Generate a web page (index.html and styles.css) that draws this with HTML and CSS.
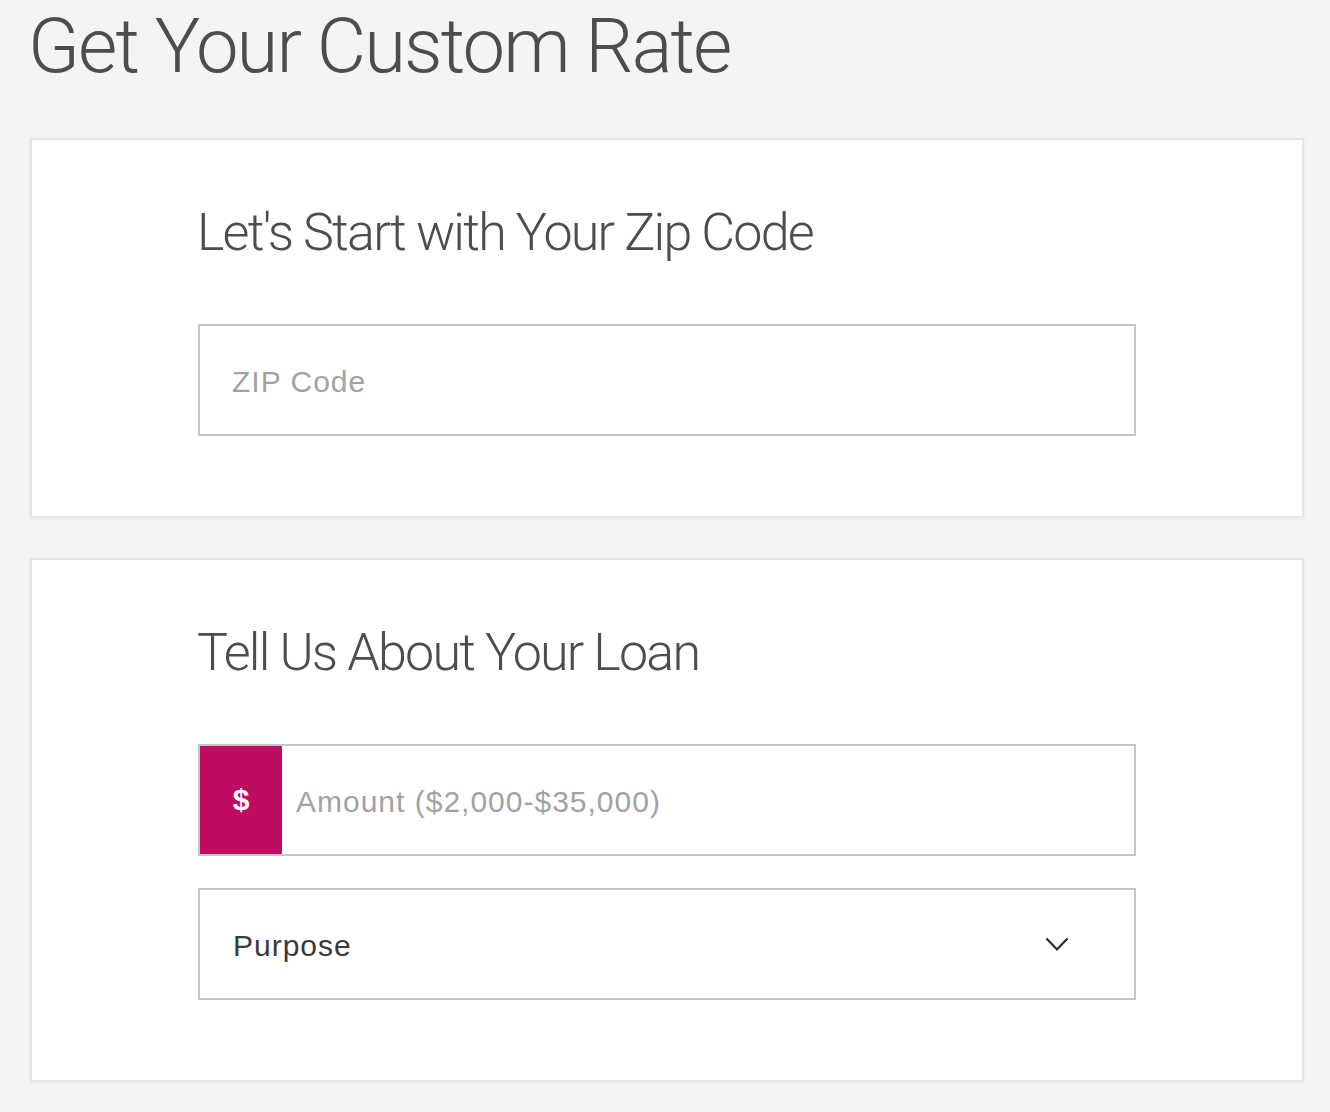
FILE: index.html
```html
<!DOCTYPE html>
<html lang="en">
<head>
<meta charset="utf-8">
<title>Get Your Custom Rate</title>
<link rel="stylesheet" href="styles.css">
</head>
<body>
<main class="page">
  <h1 class="page-title">Get Your Custom Rate</h1>

  <section class="card">
    <h2 class="card-title">Let's Start with Your Zip Code</h2>
    <div class="fields">
      <label class="field">
        <input class="field-input" type="text" placeholder="ZIP Code">
      </label>
    </div>
  </section>

  <section class="card">
    <h2 class="card-title">Tell Us About Your Loan</h2>
    <div class="fields">
      <label class="field field-money">
        <span class="field-prefix">$</span>
        <input class="field-input field-input-money" type="text" placeholder="Amount ($2,000-$35,000)">
      </label>
      <div class="field field-select">
        <span class="select-label">Purpose</span>
        <svg class="chevron" width="24" height="15" viewBox="0 0 24 15" aria-hidden="true">
          <path d="M1.5 1.5 L12 12.5 L22.5 1.5" fill="none" stroke="#2b2b2b" stroke-width="2.2"/>
        </svg>
      </div>
    </div>
  </section>
</main>
</body>
</html>
```

FILE: styles.css
```css
* {
  box-sizing: border-box;
}

html, body {
  margin: 0;
  padding: 0;
  background: #f4f4f4;
}

body {
  font-family: "Liberation Sans", Arial, sans-serif;
  color: #4d4d4d;
}

.page {
  padding: 0 26px 30px 28px;
}

.page-title {
  margin: 8px 0 54px;
  font-family: Roboto, "Liberation Sans", sans-serif;
  font-weight: 300;
  font-size: 76px;
  line-height: 76px;
  letter-spacing: -1.9px;
  color: #4d4d4d;
}

.card {
  margin-left: 2px;
  background: #fff;
  border: 2px solid #e6e6e6;
  box-shadow: 0 1px 3px rgba(0, 0, 0, 0.06);
  padding: 66px 166px 80px;
  margin-bottom: 40px;
}

.card-title {
  margin: 0 0 65px -1px;
  font-family: Roboto, "Liberation Sans", sans-serif;
  font-weight: 300;
  font-size: 52px;
  line-height: 53px;
  letter-spacing: -1.8px;
  color: #4d4d4d;
}

.fields {
  display: flex;
  flex-direction: column;
  gap: 32px;
}

.field {
  display: flex;
  align-items: center;
  height: 112px;
  border: 2px solid #c6c6c6;
  background: #fff;
}

.field-input {
  flex: 1;
  height: 100%;
  border: 0;
  outline: none;
  background: transparent;
  padding: 4px 0 0 32px;
  font-family: "Liberation Sans", Arial, sans-serif;
  font-size: 30px;
  letter-spacing: 1px;
  color: #333;
}

.field-input::placeholder {
  color: #a2a2a2;
  opacity: 1;
}

.field-prefix {
  display: flex;
  align-items: center;
  justify-content: center;
  width: 82px;
  height: 100%;
  background: #bf0c60;
  color: #fff;
  font-family: "Liberation Sans", Arial, sans-serif;
  font-weight: bold;
  font-size: 30px;
}

.field-input-money {
  padding-left: 14px;
}

.field-select {
  justify-content: space-between;
  padding: 0 65px 0 33px;
}

.select-label {
  padding-top: 4px;
  font-family: "Liberation Sans", Arial, sans-serif;
  font-size: 30px;
  letter-spacing: 1px;
  color: #3a3a3a;
}

.chevron {
  display: block;
}
```
